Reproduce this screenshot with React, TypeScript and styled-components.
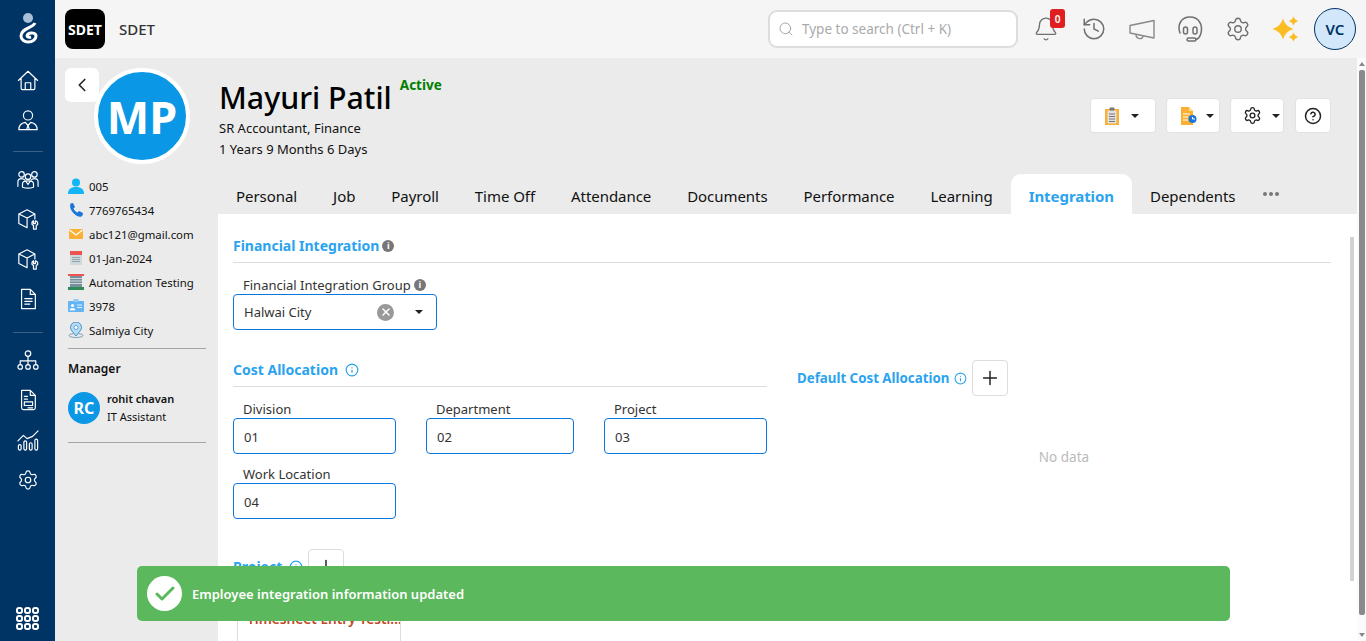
import React from "react";
import styled, { createGlobalStyle } from "styled-components";
import {
  Settings,
  Search,
  Bell,
  History,
  ChevronLeft,
  CircleHelp,
  Info,
  Plus,
  Check,
  X,
} from "lucide-react";

const GlobalStyle = createGlobalStyle`
html, body {
  margin: 0;
  padding: 0;
  height: 100%;
  overflow: hidden;
  font-family: "Noto Sans", "Open Sans", sans-serif;
  color: #111;
}
* { box-sizing: border-box; }
`;

const Shell = styled.div`
  display: flex;
  width: 1366px;
  height: 641px;
  position: relative;
  overflow: hidden;
`;

const Sidebar = styled.nav`
  width: 55px;
  flex: none;
  background: #003465;
  display: flex;
  flex-direction: column;
  align-items: center;
  color: #fff;
  padding-top: 12px;
`;

const NavGroup = styled.div`
  display: flex;
  flex-direction: column;
  align-items: center;
  gap: 18px;
  margin-top: 25px;
`;

const NavRule = styled.div<{ $top: number }>`
  width: 30px;
  height: 1px;
  background: #3a5f87;
  margin: ${(p) => p.$top}px 0 -9px;
`;

const AppsGrid = styled.div`
  margin-top: auto;
  margin-bottom: 11px;
  display: grid;
  grid-template-columns: repeat(3, 7px);
  gap: 1px;
  span {
    height: 7px;
    border: 2px solid #fff;
    border-radius: 3px;
  }
`;

const Main = styled.div`
  flex: 1;
  min-width: 0;
  display: flex;
  flex-direction: column;
`;

const TopBar = styled.header`
  height: 58px;
  flex: none;
  background: #f5f5f5;
  display: flex;
  align-items: center;
  padding: 0 10px;
`;

const Logo = styled.div`
  width: 40px;
  height: 40px;
  border-radius: 8px;
  background: #000;
  color: #fff;
  font-size: 14px;
  font-weight: 700;
  display: flex;
  align-items: center;
  justify-content: center;
`;

const OrgName = styled.span`
  margin-left: 14px;
  font-size: 15px;
  font-weight: 500;
  color: #333;
`;

const SearchBox = styled.div`
  margin-left: auto;
  width: 250px;
  height: 38px;
  background: #fff;
  border: 2px solid #ddd;
  border-radius: 9px;
  display: flex;
  align-items: center;
  gap: 8px;
  padding-left: 8px;
  color: #aaa;
  font-size: 13.5px;
`;

const TopIcons = styled.div`
  display: flex;
  align-items: center;
  margin-left: 14px;
  gap: 20px;
  color: #707070;
`;

const IconSlot = styled.div`
  position: relative;
  width: 28px;
  height: 28px;
  display: flex;
  align-items: center;
  justify-content: center;
`;

const Badge = styled.span`
  position: absolute;
  top: -6px;
  right: -5px;
  width: 15px;
  height: 19px;
  background: #e02020;
  color: #fff;
  border-radius: 3px;
  font-size: 10px;
  font-weight: 600;
  display: flex;
  align-items: center;
  justify-content: center;
`;

const UserBadge = styled.div`
  width: 42px;
  height: 42px;
  margin-left: -6px;
  border-radius: 50%;
  border: 1px solid #003465;
  background: #d3e7fb;
  color: #003465;
  font-size: 15px;
  font-weight: 600;
  display: flex;
  align-items: center;
  justify-content: center;
`;

const Body = styled.div`
  flex: 1;
  min-height: 0;
  display: flex;
  overflow: hidden;
  background: #ebebeb;
`;

const ScrollRail = styled.div`
  width: 9px;
  flex: none;
  background: #fbfbfb;
  display: flex;
  flex-direction: column;
  align-items: center;
  padding: 4px 0;
  &::before,
  &::after {
    content: "";
    width: 0;
    height: 0;
    border-left: 3.5px solid transparent;
    border-right: 3.5px solid transparent;
  }
  &::before { border-bottom: 4px solid #888; }
  &::after { border-top: 4px solid #888; }
`;

const ScrollThumb = styled.div`
  flex: 1;
  width: 6px;
  margin: 4px 0 18px;
  background: #8a8a8a;
  border-radius: 2px;
`;

const InnerThumb = styled.div`
  position: absolute;
  top: 23px;
  right: 3px;
  width: 4px;
  height: 344px;
  background: #d2d2d2;
`;

const Profile = styled.aside`
  width: 163px;
  flex: none;
  position: relative;
  padding: 10px 0 0 13px;
`;

const BackButton = styled.button`
  position: absolute;
  top: 10px;
  left: 10px;
  z-index: 2;
  width: 34px;
  height: 34px;
  border: 0;
  border-radius: 6px;
  background: #fff;
  padding: 0;
  display: flex;
  align-items: center;
  justify-content: center;
  color: #222;
`;

const Avatar = styled.div`
  width: 96px;
  height: 96px;
  margin-left: 26px;
  border-radius: 50%;
  background: #0a97e5;
  border: 4px solid #fff;
  color: #fff;
  font-size: 45px;
  font-weight: 700;
  display: flex;
  align-items: center;
  justify-content: center;
`;

const Facts = styled.ul`
  list-style: none;
  margin: 10px 0 0;
  padding: 0;
`;

const Fact = styled.li`
  height: 24px;
  display: flex;
  align-items: center;
  gap: 5px;
  font-size: 11.4px;
  white-space: nowrap;
  svg { flex: none; }
`;

const Rule = styled.div`
  height: 1px;
  width: 138px;
  background: #a5a5a5;
  margin-top: 6px;
`;

const ManagerTitle = styled.div`
  font-size: 12px;
  font-weight: 600;
  margin: 11px 0 13px;
`;

const Manager = styled.div`
  display: flex;
  gap: 7px;
  align-items: center;
  margin-bottom: 16px;
`;

const SmallAvatar = styled.div`
  width: 32px;
  height: 32px;
  border-radius: 50%;
  background: #0a97e5;
  color: #fff;
  font-size: 16px;
  font-weight: 700;
  display: flex;
  align-items: center;
  justify-content: center;
`;

const ManagerName = styled.div`
  font-size: 11px;
  font-weight: 600;
  line-height: 18px;
`;

const ManagerRole = styled.div`
  font-size: 11px;
  line-height: 18px;
`;

const Detail = styled.section`
  flex: 1;
  min-width: 0;
`;

const Head = styled.div`
  height: 156px;
  padding: 20px 26px 0 1px;
  display: flex;
  justify-content: space-between;
`;

const NameRow = styled.div`
  display: flex;
  align-items: flex-start;
  gap: 8px;
`;

const Name = styled.h1`
  margin: 0;
  font-size: 30.3px;
  line-height: 40px;
  font-weight: 500;
  color: #000;
`;

const Status = styled.span`
  color: #008000;
  font-size: 13.5px;
  font-weight: 700;
  line-height: 14px;
`;

const SubLine = styled.div`
  font-size: 13px;
  line-height: 21px;
`;

const Actions = styled.div`
  display: flex;
  gap: 10px;
  margin-top: 20px;
`;

const ActionButton = styled.button<{ $w: number; $pad: number; $gap?: number }>`
  width: ${(p) => p.$w}px;
  height: 35px;
  background: #fff;
  border: 1px solid #e2e2e2;
  border-radius: 4px;
  padding: 0 0 0 ${(p) => p.$pad}px;
  display: flex;
  align-items: center;
  gap: ${(p) => p.$gap ?? 11}px;
  color: #222;
`;

const HelpButton = styled(ActionButton)`
  margin-left: 1px;
`;

const Caret = styled.span`
  width: 0;
  height: 0;
  border-left: 4px solid transparent;
  border-right: 4px solid transparent;
  border-top: 4px solid #222;
`;

const TabBar = styled.div`
  position: relative;
  margin-top: -40px;
  height: 40px;
  display: flex;
  align-items: flex-end;
`;

const Tab = styled.div<{ $active?: boolean }>`
  height: 40px;
  padding: 3px 18px 0;
  display: flex;
  align-items: center;
  font-size: 15px;
  letter-spacing: -0.055px;
  white-space: nowrap;
  border-radius: 10px 10px 0 0;
  background: ${(p) => (p.$active ? "#fff" : "transparent")};
  color: ${(p) => (p.$active ? "#2ba3ee" : "#111")};
  font-weight: ${(p) => (p.$active ? 700 : 400)};
`;

const More = styled.div`
  display: flex;
  gap: 2px;
  margin: 0 0 18px 10px;
  span {
    width: 4px;
    height: 4px;
    border-radius: 50%;
    background: #777;
  }
`;

const Content = styled.div`
  position: relative;
  background: #fff;
  padding: 20px 26px 0 15px;
  height: 560px;
`;

const SectionTitle = styled.div<{ $small?: boolean }>`
  display: flex;
  align-items: center;
  gap: ${(p) => (p.$small ? 5 : 3)}px;
  color: #2ba3ee;
  font-size: ${(p) => (p.$small ? 13.3 : 14)}px;
  font-weight: 700;
  line-height: 24px;
  white-space: nowrap;
`;

const SectionHead = styled.div`
  border-bottom: 1px solid #ddd;
  padding-bottom: 4px;
`;

const FieldLabel = styled.div`
  display: flex;
  align-items: center;
  gap: 3px;
  font-size: 13px;
  line-height: 18px;
  padding-left: 10px;
  color: #333;
`;

const GroupField = styled.div`
  margin-top: 13px;
`;

const SelectBox = styled.div`
  width: 204px;
  height: 36px;
  border: 1px solid #0a76e0;
  border-radius: 4px;
  display: flex;
  align-items: center;
  padding: 0 13px 0 10px;
  font-size: 13px;
  color: #333;
`;

const ClearDot = styled.span`
  margin-left: auto;
  margin-right: 21px;
  width: 17px;
  height: 17px;
  border-radius: 50%;
  background: #999;
  color: #fff;
  display: flex;
  align-items: center;
  justify-content: center;
`;

const InfoDot = styled.span`
  width: 12px;
  height: 12px;
  border-radius: 50%;
  background: #777;
  color: #fff;
  font-size: 9px;
  font-weight: 700;
  display: flex;
  align-items: center;
  justify-content: center;
`;

const Columns = styled.div`
  display: flex;
  margin-top: 28px;
`;

const CostColumn = styled.div`
  width: 534px;
  flex: none;
`;

const DefaultColumn = styled.div`
  flex: 1;
  padding-left: 30px;
`;

const DefaultHead = styled.div`
  display: flex;
  align-items: center;
  gap: 5px;
  margin-top: 2px;
`;

const SquareButton = styled.button`
  width: 36px;
  height: 36px;
  background: #fff;
  border: 1px solid #ddd;
  border-radius: 4px;
  padding: 0;
  display: flex;
  align-items: center;
  justify-content: center;
  color: #222;
`;

const Empty = styled.div`
  width: 534px;
  text-align: center;
  margin-top: 52px;
  font-size: 13.5px;
  color: #bbb;
`;

const CostGrid = styled.div`
  display: flex;
  flex-wrap: wrap;
  gap: 11px 30px;
  margin-top: 13px;
`;

const Field = styled.div<{ $w: number }>`
  width: ${(p) => p.$w}px;
`;

const InputBox = styled.div`
  height: 36px;
  border: 1px solid #0a76e0;
  border-radius: 4px;
  display: flex;
  align-items: center;
  padding: 1px 0 0 10px;
  font-size: 13px;
  color: #333;
`;

const ProjectHead = styled.div`
  display: flex;
  align-items: center;
  gap: 5px;
  margin-top: 30px;
`;

const ProjectCard = styled.div`
  width: 164px;
  margin: 18px 0 0 4px;
  height: 80px;
  border: 1px solid #ddd;
  border-radius: 4px;
  padding: 5px 9px;
  color: #c0481f;
  font-size: 13.7px;
  font-weight: 600;
  white-space: nowrap;
  overflow: hidden;
`;

const Toast = styled.div`
  position: absolute;
  left: 137px;
  top: 566px;
  width: 1093px;
  height: 55px;
  background: #5cb85c;
  border-radius: 5px;
  display: flex;
  align-items: center;
  padding-left: 10px;
  gap: 10px;
  color: #fff;
  font-size: 13px;
  font-weight: 600;
`;

const ToastIcon = styled.div`
  width: 35px;
  height: 35px;
  border-radius: 50%;
  background: #fff;
  color: #5cb85c;
  display: flex;
  align-items: center;
  justify-content: center;
`;

const Logomark = () => (
  <svg width="20" height="32" viewBox="0 0 20 32" fill="none">
    <circle cx="10" cy="6" r="5" fill="#a9c0d8" />
    <path
      d="M17 11 C15 16 3 16 3 24 C3 28 7 30 10 30 C15 30 18 27 18 24 C18 21 13 20 10 22 C8 24 10 26 13 25"
      stroke="#fff"
      strokeWidth="3"
    />
  </svg>
);

const NavIcon = ({ d, children }: { d?: string; children?: React.ReactNode }) => (
  <svg width="22" height="22" viewBox="0 0 24 24" fill="none" stroke="#fff" strokeWidth="1.3" strokeLinecap="round" strokeLinejoin="round">
    {d && <path d={d} />}
    {children}
  </svg>
);

const HomeIcon = () => <NavIcon d="M1.5 12.5 L12 2.5 L22.5 12.5 M4.5 10 V21 a1.5 1.5 0 0 0 1.5 1.5 H18 a1.5 1.5 0 0 0 1.5 -1.5 V10 M9 22.5 V15 H15 V22.5" />;

const StaffIcon = () => (
  <NavIcon d="M2 22.5 C2 17 6 15 9 14.5 L12 18 L15 14.5 C18 15 22 17 22 22.5 Z M12 18 L10.5 22.5 M12 18 L13.5 22.5">
    <circle cx="12" cy="7" r="5" />
  </NavIcon>
);

const TeamIcon = () => (
  <NavIcon d="M1 20 V15 C1 12.5 3 11.5 5 11.5 C6.5 11.5 7.5 12 8.5 13 M23 20 V15 C23 12.5 21 11.5 19 11.5 C17.5 11.5 16.5 12 15.5 13 M6 21 V17 C6 15 8 14 12 14 C16 14 18 15 18 17 V21 C15 22 9 22 6 21 Z M10 15 L12 18 L14 15">
    <circle cx="5" cy="7" r="3" />
    <circle cx="19" cy="7" r="3" />
    <circle cx="12" cy="9.5" r="3" />
  </NavIcon>
);

const BoxToolIcon = () => (
  <NavIcon d="M11 2 L2 6.5 V17 L11 21.5 M11 2 L19.5 6.5 V12 M2 6.5 L11 11 L19.5 6.5 M11 11 V21.5 M18 14 V17 H20 V14 C22 14.5 23 16 22.5 18 L21 19 V23 H18 V19 L16.5 18 C16 16 16.5 14.5 18 14 Z" />
);

const DocIcon = () => (
  <NavIcon d="M5 1.5 H14.5 L20 7 V22.5 H5 Z M14.5 1.5 V7 H20 M8.5 11.5 H16.5 M8.5 14.5 H16.5 M8.5 17.5 H14" />
);

const OrgIcon = () => (
  <NavIcon d="M12 8 V13 M3.5 17 V13 H20.5 V17 M12 13 V17">
    <circle cx="12" cy="5" r="3" />
    <circle cx="3.5" cy="19.5" r="2.5" />
    <circle cx="12" cy="19.5" r="2.5" />
    <circle cx="20.5" cy="19.5" r="2.5" />
  </NavIcon>
);

const ReportIcon = () => (
  <NavIcon d="M5 1.5 H14.5 L20 7 V20.5 a2 2 0 0 1 -2 2 H7 a2 2 0 0 1 -2 -2 Z M14.5 1.5 V7 H20 M8 8 H11.5 M8 11 H11.5 M8 14 H17 V18 H8 Z M12 20.5 H17" />
);

const TrendIcon = () => (
  <NavIcon d="M1 13 L7 7 L11 10.5 L17 8 L23 2">
    <rect x="1.5" y="17" width="3" height="6" rx="1.5" />
    <rect x="7.5" y="13" width="3" height="10" rx="1.5" />
    <rect x="13.5" y="15" width="3" height="8" rx="1.5" />
    <rect x="19.5" y="11" width="3" height="12" rx="1.5" />
  </NavIcon>
);

const GearNavIcon = () => <Settings size={22} strokeWidth={1.3} />;

const Megaphone = () => (
  <svg width="28" height="28" viewBox="0 0 28 28" fill="none" stroke="#888" strokeWidth="1.4" strokeLinejoin="round">
    <path d="M2 10.5 L26 5.5 V23 L2 18 Z" />
    <path d="M8 19.5 C8 24.5 15 25 15 21" />
  </svg>
);

const HeadsetFace = () => (
  <svg width="28" height="28" viewBox="0 0 28 28" fill="none" stroke="#707070" strokeWidth="1.5" strokeLinecap="round">
    <path d="M4 18 C1 10 5 2 14 2 C23 2 27 10 25 18 C24 22 22 24 20 24.5" />
    <rect x="7.5" y="12" width="4" height="7" rx="2" />
    <rect x="17" y="12" width="4" height="7" rx="2" />
    <rect x="11" y="23" width="9" height="3" rx="1.5" />
  </svg>
);

const star = (x: number, y: number, r: number) => {
  const k = r * 0.22;
  return `M${x} ${y - r} Q${x + k} ${y - k} ${x + r} ${y} Q${x + k} ${y + k} ${x} ${y + r} Q${x - k} ${y + k} ${x - r} ${y} Q${x - k} ${y - k} ${x} ${y - r} Z`;
};

const Sparkle = () => (
  <svg width="28" height="28" viewBox="0 0 28 28" fill="#fbbc24">
    <path d={star(11, 14, 10.5)} />
    <path d={star(21.5, 6, 4.8)} />
    <path d={star(21.5, 22, 4.8)} />
  </svg>
);

const FactSvg = ({ children }: { children: React.ReactNode }) => (
  <svg width="16" height="16" viewBox="0 0 16 16">
    {children}
  </svg>
);

const facts: [React.ReactNode, string][] = [
  [
    <FactSvg>
      <circle cx="8" cy="4.5" r="4" fill="#12b5f5" />
      <path d="M0 16 C0 10.5 4 9 8 9 C12 9 16 10.5 16 16 Z" fill="#12b5f5" />
    </FactSvg>,
    "005",
  ],
  [
    <FactSvg>
      <path d="M2.5 1.5 L5 1 L7 5 L5.5 6.5 C6.2 8.5 8 10 9.5 10.5 L11 9 L15 11 L14.5 13.5 C13 15.5 10 15 7 12.5 C4 10 1 6 2.5 1.5 Z" fill="#1b74d8" />
    </FactSvg>,
    "7769765434",
  ],
  [
    <FactSvg>
      <rect x="1" y="3" width="14" height="10" rx="1" fill="#fbb034" />
      <path d="M1.5 4 L8 9 L14.5 4" stroke="#fff" strokeWidth="1.2" fill="none" />
    </FactSvg>,
    "abc121@gmail.com",
  ],
  [
    <FactSvg>
      <rect x="2" y="1" width="12" height="14" rx="1" fill="#cfd8dc" />
      <rect x="2" y="1" width="12" height="4" fill="#ef5350" />
      <path d="M4 7.5 H12 M4 9.5 H12 M4 11.5 H12" stroke="#90a4ae" strokeWidth="1" />
    </FactSvg>,
    "01-Jan-2024",
  ],
  [
    <FactSvg>
      <rect x="0" y="0" width="16" height="2" fill="#ef5350" />
      <rect x="2" y="2" width="12" height="11" fill="#78909c" />
      <path d="M2 4.5 H14 M2 7 H14 M2 9.5 H14" stroke="#cfd8dc" strokeWidth="1" />
      <rect x="0" y="13" width="16" height="3" fill="#2e8b57" />
    </FactSvg>,
    "Automation Testing",
  ],
  [
    <FactSvg>
      <rect x="0" y="3" width="16" height="11" rx="1" fill="#64b5f6" />
      <rect x="5.5" y="1" width="5" height="3" fill="#90caf9" />
      <circle cx="4.5" cy="7.5" r="1.6" fill="#fff" />
      <path d="M2 12 C2 10 7 10 7 12 Z M9 7 H14 M9 9.5 H14" fill="#fff" stroke="#fff" strokeWidth="0.8" />
    </FactSvg>,
    "3978",
  ],
  [
    <FactSvg>
      <ellipse cx="8" cy="13.5" rx="7" ry="2" fill="none" stroke="#7da0b8" strokeWidth="1" />
      <path d="M8 14 C5 10 2.5 8 2.5 5.5 a5.5 5.5 0 0 1 11 0 C13.5 8 11 10 8 14 Z" fill="#b3dcf5" stroke="#4c8fc4" strokeWidth="1" />
      <circle cx="8" cy="5.5" r="2" fill="#fff" stroke="#4c8fc4" strokeWidth="0.8" />
    </FactSvg>,
    "Salmiya City",
  ],
];

const ClipboardIcon = () => (
  <svg width="14" height="18" viewBox="0 0 14 18">
    <rect x="0" y="2" width="14" height="16" fill="#fbb034" />
    <rect x="2.5" y="3.5" width="9" height="13" fill="#e0e0e0" />
    <rect x="4.5" y="0.5" width="5" height="3" rx="1" fill="#777" />
    <path d="M4 7 H10 M4 9.5 H10 M4 12 H10 M4 14.5 H10" stroke="#777" strokeWidth="1" />
  </svg>
);

const ReportClockIcon = () => (
  <svg width="17" height="18" viewBox="0 0 17 18">
    <path d="M1 0 H9 L13 4 V18 H1 Z" fill="#fbb034" />
    <path d="M9 0 L13 4 H9 Z" fill="#fde0a0" />
    <path d="M3 7 H10 M3 10 H8 M3 13 H8" stroke="#fff" strokeWidth="1" />
    <circle cx="12.5" cy="12" r="4" fill="#1b74d8" />
    <path d="M12.5 10 V12 H15" stroke="#fff" strokeWidth="1" fill="none" />
  </svg>
);

const navGroups: (() => React.ReactElement)[][] = [
  [HomeIcon, StaffIcon],
  [TeamIcon, BoxToolIcon, BoxToolIcon, DocIcon],
  [OrgIcon, ReportIcon, TrendIcon, GearNavIcon],
];

const tabs = [
  "Personal",
  "Job",
  "Payroll",
  "Time Off",
  "Attendance",
  "Documents",
  "Performance",
  "Learning",
  "Integration",
  "Dependents",
];

export default function App() {
  return (
    <Shell>
      <GlobalStyle />
      <Sidebar>
        <Logomark />
        {navGroups.map((group, g) => (
          <React.Fragment key={g}>
            {g > 0 && <NavRule $top={g === 1 ? 20 : 22} />}
            <NavGroup>
              {group.map((Icon, i) => (
                <Icon key={i} />
              ))}
            </NavGroup>
          </React.Fragment>
        ))}
        <AppsGrid>
          {Array.from({ length: 9 }).map((_, i) => (
            <span key={i} />
          ))}
        </AppsGrid>
      </Sidebar>
      <Main>
        <TopBar>
          <Logo>SDET</Logo>
          <OrgName>SDET</OrgName>
          <SearchBox>
            <Search size={16} strokeWidth={1.3} color="#999" />
            Type to search (Ctrl + K)
          </SearchBox>
          <TopIcons>
            <IconSlot>
              <Bell size={26} strokeWidth={1.2} />
              <Badge>0</Badge>
            </IconSlot>
            <IconSlot>
              <History size={26} strokeWidth={1.4} />
            </IconSlot>
            <IconSlot>
              <Megaphone />
            </IconSlot>
            <IconSlot>
              <HeadsetFace />
            </IconSlot>
            <IconSlot>
              <Settings size={26} strokeWidth={1.3} />
            </IconSlot>
            <IconSlot>
              <Sparkle />
            </IconSlot>
            <UserBadge>VC</UserBadge>
          </TopIcons>
        </TopBar>
        <Body>
          <Profile>
            <BackButton>
              <ChevronLeft size={22} strokeWidth={1.8} />
            </BackButton>
            <Avatar>MP</Avatar>
            <Facts>
              {facts.map(([icon, text]) => (
                <Fact key={text}>
                  {icon}
                  {text}
                </Fact>
              ))}
            </Facts>
            <Rule />
            <ManagerTitle>Manager</ManagerTitle>
            <Manager>
              <SmallAvatar>RC</SmallAvatar>
              <div>
                <ManagerName>rohit chavan</ManagerName>
                <ManagerRole>IT Assistant</ManagerRole>
              </div>
            </Manager>
            <Rule />
          </Profile>
          <Detail>
            <Head>
              <div>
                <NameRow>
                  <Name>Mayuri Patil</Name>
                  <Status>Active</Status>
                </NameRow>
                <SubLine>SR Accountant, Finance</SubLine>
                <SubLine>1 Years 9 Months 6 Days</SubLine>
              </div>
              <Actions>
                <ActionButton $w={66} $pad={14} $gap={12}>
                  <ClipboardIcon />
                  <Caret />
                </ActionButton>
                <ActionButton $w={54} $pad={13} $gap={9}>
                  <ReportClockIcon />
                  <Caret />
                </ActionButton>
                <ActionButton $w={54} $pad={12} $gap={10}>
                  <Settings size={19} strokeWidth={1.7} />
                  <Caret />
                </ActionButton>
                <HelpButton $w={36} $pad={8}>
                  <CircleHelp size={18} strokeWidth={2} />
                </HelpButton>
              </Actions>
            </Head>
            <TabBar>
              {tabs.map((t) => (
                <Tab key={t} $active={t === "Integration"}>
                  {t}
                </Tab>
              ))}
              <More>
                <span />
                <span />
                <span />
              </More>
            </TabBar>
            <Content>
              <SectionHead>
                <SectionTitle>
                  Financial Integration <InfoDot>i</InfoDot>
                </SectionTitle>
              </SectionHead>
              <GroupField>
                <FieldLabel>
                  Financial Integration Group <InfoDot>i</InfoDot>
                </FieldLabel>
                <SelectBox>
                  Halwai City
                  <ClearDot>
                    <X size={12} strokeWidth={3} />
                  </ClearDot>
                  <Caret />
                </SelectBox>
              </GroupField>
              <Columns>
                <CostColumn>
                  <SectionHead>
                    <SectionTitle>
                      Cost Allocation&nbsp;
                      <Info size={14} strokeWidth={2} />
                    </SectionTitle>
                  </SectionHead>
                  <CostGrid>
                    <Field $w={163}>
                      <FieldLabel>Division</FieldLabel>
                      <InputBox>01</InputBox>
                    </Field>
                    <Field $w={148}>
                      <FieldLabel>Department</FieldLabel>
                      <InputBox>02</InputBox>
                    </Field>
                    <Field $w={163}>
                      <FieldLabel>Project</FieldLabel>
                      <InputBox>03</InputBox>
                    </Field>
                    <Field $w={163}>
                      <FieldLabel>Work Location</FieldLabel>
                      <InputBox>04</InputBox>
                    </Field>
                  </CostGrid>
                  <ProjectHead>
                    <SectionTitle>
                      Project&nbsp;
                      <Info size={14} strokeWidth={2} />
                    </SectionTitle>
                    <SquareButton>
                      <Plus size={22} strokeWidth={1.6} />
                    </SquareButton>
                  </ProjectHead>
                  <ProjectCard>Timesheet Entry Testi...</ProjectCard>
                </CostColumn>
                <DefaultColumn>
                  <DefaultHead>
                    <SectionTitle $small>
                      Default Cost Allocation
                      <Info size={13} strokeWidth={2} />
                    </SectionTitle>
                    <SquareButton>
                      <Plus size={22} strokeWidth={1.6} />
                    </SquareButton>
                  </DefaultHead>
                  <Empty>No data</Empty>
                </DefaultColumn>
              </Columns>
              <InnerThumb />
            </Content>
          </Detail>
          <ScrollRail>
            <ScrollThumb />
          </ScrollRail>
        </Body>
      </Main>
      <Toast>
        <ToastIcon>
          <Check size={24} strokeWidth={3} />
        </ToastIcon>
        Employee integration information updated
      </Toast>
    </Shell>
  );
}
